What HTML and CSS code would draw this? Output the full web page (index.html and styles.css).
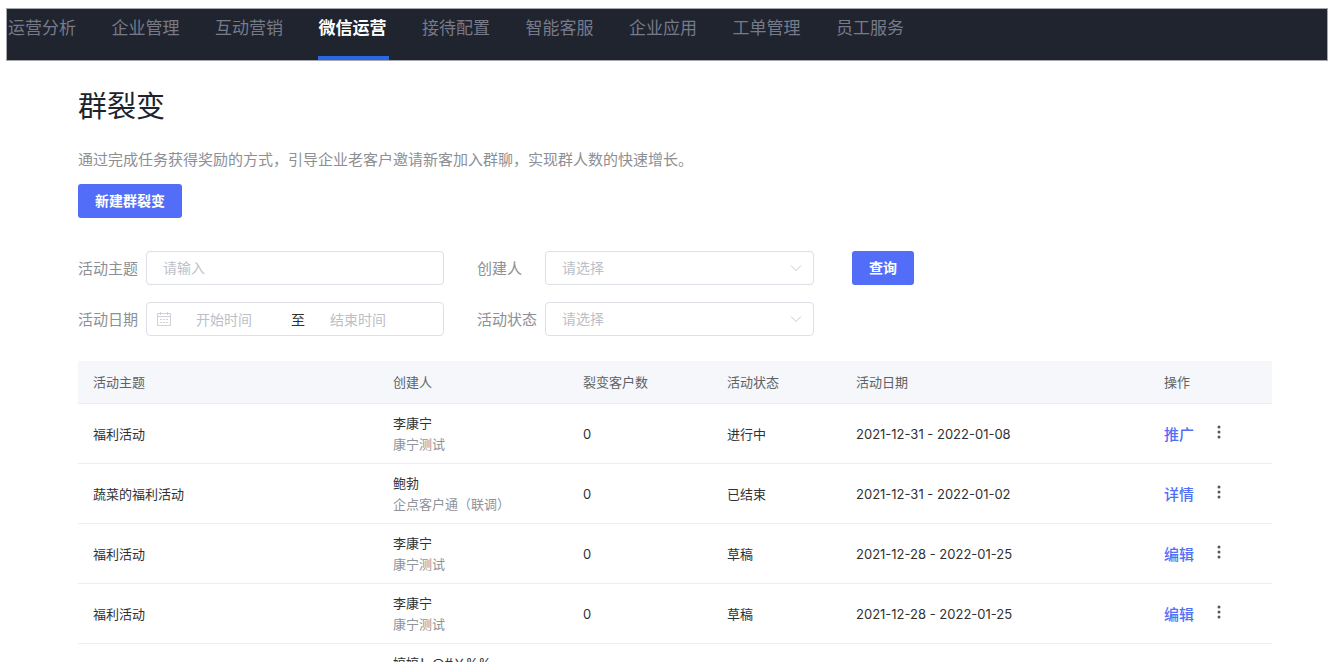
FILE: index.html
```html
<!DOCTYPE html>
<html lang="zh-CN">
<head>
<meta charset="utf-8">
<title>群裂变</title>
<link rel="stylesheet" href="styles.css">
</head>
<body>
<nav class="topnav">
  <ul class="topnav-list">
    <li><a class="topnav-link" href="#">运营分析</a></li>
    <li><a class="topnav-link" href="#">企业管理</a></li>
    <li><a class="topnav-link" href="#">互动营销</a></li>
    <li><a class="topnav-link is-active" href="#" aria-current="page">微信运营</a></li>
    <li><a class="topnav-link" href="#">接待配置</a></li>
    <li><a class="topnav-link" href="#">智能客服</a></li>
    <li><a class="topnav-link" href="#">企业应用</a></li>
    <li><a class="topnav-link" href="#">工单管理</a></li>
    <li><a class="topnav-link" href="#">员工服务</a></li>
  </ul>
</nav>

<main class="page">
  <h1 class="title">群裂变</h1>
  <p class="desc">通过完成任务获得奖励的方式，引导企业老客户邀请新客加入群聊，实现群人数的快速增长。</p>
  <button class="btn" type="button">新建群裂变</button>

  <form class="filters">
    <div class="field">
      <label class="label" for="topic">活动主题</label>
      <input class="control" id="topic" type="text" placeholder="请输入">
    </div>
    <div class="field">
      <label class="label" for="creator">创建人</label>
      <span class="select-box">
        <select class="control select" id="creator"><option>请选择</option></select>
        <svg class="chevron" viewBox="0 0 12 8" aria-hidden="true"><path d="M1 1.5l5 5 5-5"/></svg>
      </span>
    </div>
    <button class="btn" type="button">查询</button>
    <div class="field">
      <label class="label" for="start">活动日期</label>
      <span class="control range">
        <svg class="calendar" viewBox="0 0 14 14" aria-hidden="true"><path d="M.5 1.5h13v12H.5zM.5 4.5h13M3.5 0v3M10.5 0v3M3 7.5h2M6 7.5h2M9 7.5h2M3 10.5h2M6 10.5h2M9 10.5h2"/></svg>
        <input class="range-input" id="start" type="text" placeholder="开始时间">
        <span class="range-sep">至</span>
        <input class="range-input" type="text" placeholder="结束时间" aria-label="结束时间">
      </span>
    </div>
    <div class="field">
      <label class="label" for="status">活动状态</label>
      <span class="select-box">
        <select class="control select" id="status"><option>请选择</option></select>
        <svg class="chevron" viewBox="0 0 12 8" aria-hidden="true"><path d="M1 1.5l5 5 5-5"/></svg>
      </span>
    </div>
  </form>

  <table class="table">
    <colgroup>
      <col class="col-topic"><col class="col-creator"><col class="col-count"><col class="col-status"><col class="col-date"><col class="col-action">
    </colgroup>
    <thead>
      <tr><th>活动主题</th><th>创建人</th><th>裂变客户数</th><th>活动状态</th><th>活动日期</th><th>操作</th></tr>
    </thead>
    <tbody>
      <tr>
        <td>福利活动</td>
        <td class="creator">李康宁<span class="org">康宁测试</span></td>
        <td>0</td><td>进行中</td><td>2021-12-31 - 2022-01-08</td>
        <td><div class="actions"><a class="action" href="#">推广</a><button class="more" type="button" aria-label="更多"><svg viewBox="0 0 4 14"><circle cx="2" cy="2" r="1.5"/><circle cx="2" cy="7" r="1.5"/><circle cx="2" cy="12" r="1.5"/></svg></button></div></td>
      </tr>
      <tr>
        <td>蔬菜的福利活动</td>
        <td class="creator">鲍勃<span class="org">企点客户通（联调）</span></td>
        <td>0</td><td>已结束</td><td>2021-12-31 - 2022-01-02</td>
        <td><div class="actions"><a class="action" href="#">详情</a><button class="more" type="button" aria-label="更多"><svg viewBox="0 0 4 14"><circle cx="2" cy="2" r="1.5"/><circle cx="2" cy="7" r="1.5"/><circle cx="2" cy="12" r="1.5"/></svg></button></div></td>
      </tr>
      <tr>
        <td>福利活动</td>
        <td class="creator">李康宁<span class="org">康宁测试</span></td>
        <td>0</td><td>草稿</td><td>2021-12-28 - 2022-01-25</td>
        <td><div class="actions"><a class="action" href="#">编辑</a><button class="more" type="button" aria-label="更多"><svg viewBox="0 0 4 14"><circle cx="2" cy="2" r="1.5"/><circle cx="2" cy="7" r="1.5"/><circle cx="2" cy="12" r="1.5"/></svg></button></div></td>
      </tr>
      <tr>
        <td>福利活动</td>
        <td class="creator">李康宁<span class="org">康宁测试</span></td>
        <td>0</td><td>草稿</td><td>2021-12-28 - 2022-01-25</td>
        <td><div class="actions"><a class="action" href="#">编辑</a><button class="more" type="button" aria-label="更多"><svg viewBox="0 0 4 14"><circle cx="2" cy="2" r="1.5"/><circle cx="2" cy="7" r="1.5"/><circle cx="2" cy="12" r="1.5"/></svg></button></div></td>
      </tr>
      <tr>
        <td></td>
        <td class="creator">婷婷！@#￥%%</td>
        <td></td><td></td><td></td><td></td>
      </tr>
    </tbody>
  </table>
</main>
</body>
</html>
```

FILE: styles.css
```css
* {
  box-sizing: border-box;
}

body {
  height: 100vh;
  margin: 0;
  padding-top: 8px;
  overflow: hidden;
  background: #fff;
  color: #303133;
  font-family: Inter, "Noto Sans CJK SC", sans-serif;
  font-size: 13px;
}

input,
select,
button {
  font-family: inherit;
}

/* Top navigation */
.topnav {
  margin: 0 8px 0 6px;
  border: 1px solid #a5a7ac;
  background: #20242f;
}

.topnav-list {
  display: flex;
  justify-content: space-between;
  max-width: 899px;
  margin: 0;
  padding: 0;
  list-style: none;
}

.topnav-link {
  display: block;
  height: 51px;
  padding: 6px 2px 0 1px;
  border-bottom: 4px solid transparent;
  color: #777a89;
  font-size: 17px;
  line-height: 26px;
  text-decoration: none;
}

.topnav-link.is-active {
  border-color: #2a66e8;
  color: #fff;
  font-weight: 700;
}

/* Page */
.page {
  padding: 25px 64px 0 78px;
}

.title {
  margin: 0;
  color: #20232e;
  font-size: 29px;
  font-weight: 400;
  line-height: 42px;
}

.desc {
  margin: 21px 0 13px;
  color: #8d8f94;
  font-size: 15px;
  line-height: 22px;
}

.btn {
  height: 34px;
  padding: 0 17px 3px;
  border: 0;
  border-radius: 3px;
  background: #526ef8;
  color: #fff;
  font-size: 14px;
  font-weight: 700;
}

/* Filters */
.filters {
  display: grid;
  grid-template-columns: 366px 337px auto;
  justify-content: start;
  gap: 17px 33px;
  margin: 33px 0 25px;
}

.filters .btn {
  margin-left: 5px;
}

.field {
  display: flex;
  align-items: center;
}

.label {
  flex: 0 0 68px;
  padding-bottom: 2px;
  color: #8d8f94;
  font-size: 15px;
}

.control {
  flex: 1;
  width: 100%;
  min-width: 0;
  height: 34px;
  padding: 0 16px 2px;
  border: 1px solid #dcdfe6;
  border-radius: 4px;
  background: #fff;
  color: #303133;
  font-size: 14px;
}

::placeholder {
  color: #bcbfc8;
  opacity: 1;
}

.select-box {
  position: relative;
  flex: 1;
}

.select {
  display: block;
  appearance: none;
  color: #bcbfc8;
}

.chevron {
  position: absolute;
  top: 13px;
  right: 12px;
  width: 12px;
  height: 8px;
  fill: none;
  stroke: #c8cad2;
  pointer-events: none;
}

.range {
  display: flex;
  align-items: center;
  padding: 0 10px;
}

.calendar {
  flex: none;
  width: 14px;
  height: 14px;
  fill: none;
  stroke: #cfd1d8;
}

.range-input {
  flex: 0 1 106px;
  min-width: 0;
  padding: 0;
  border: 0;
  background: none;
  font-size: 14px;
  text-align: center;
}

.range-sep {
  flex: 0 0 28px;
  font-size: 14px;
  text-align: right;
}

/* Table */
.table {
  width: 100%;
  border-collapse: separate;
  border-spacing: 0;
  table-layout: fixed;
}

.col-topic { width: 300px; }
.col-creator { width: 190px; }
.col-count { width: 144px; }
.col-status { width: 129px; }
.col-date { width: 308px; }
.col-action { width: 123px; }

.table th,
.table td {
  padding: 0 15px;
  border-bottom: 1px solid #ebeef5;
  text-align: left;
}

.table th {
  height: 43px;
  padding-bottom: 2px;
  background: #f5f7fb;
  color: #606266;
  font-weight: 400;
}

.table td {
  height: 60px;
}

.table .creator {
  padding-top: 9px;
  line-height: 21px;
  vertical-align: top;
}

.org {
  display: block;
  color: #909399;
}

.actions {
  display: flex;
  align-items: center;
  gap: 23px;
}

.action {
  color: #526ef8;
  font-size: 15px;
  font-weight: 500;
  text-decoration: none;
}

.more {
  width: 4px;
  height: 20px;
  padding: 0 0 4px;
  border: 0;
  background: none;
}

.more svg {
  display: block;
  width: 4px;
  height: 14px;
  fill: #55575c;
}
```
